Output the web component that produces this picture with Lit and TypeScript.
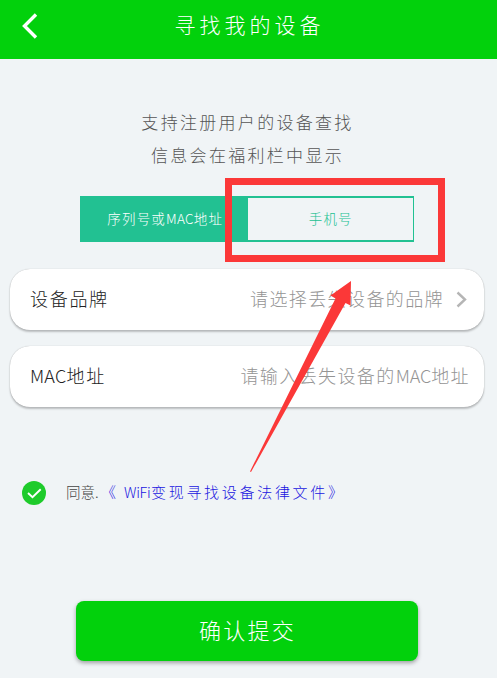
import { LitElement, html, css } from "lit";
import { customElement, property, state } from "lit/decorators.js";

@customElement("form-row")
export class FormRow extends LitElement {
  static styles = css`
    :host {
      display: block;
    }

    .row {
      display: flex;
      align-items: center;
      justify-content: space-between;
      height: 61px;
      box-sizing: border-box;
      padding: 0 14px 4px 20px;
      background: #fff;
      border-radius: 20px;
      box-shadow: 0 2px 2px rgba(0, 0, 0, 0.22), 0 0 1px rgba(0, 0, 0, 0.3);
      font-size: 18px;
      line-height: 26px;
      white-space: nowrap;
    }

    .label {
      color: #222;
      letter-spacing: 1.7px;
    }

    .value {
      display: flex;
      align-items: center;
      color: #949494;
      letter-spacing: 1.4px;
    }

    .latin {
      letter-spacing: 0.2px;
    }

    .value .latin {
      letter-spacing: -0.1px;
    }

    .chevron {
      display: block;
      margin: 4px 3px 0 12px;
    }
  `;

  @property() label = "";
  @property() placeholder = "";
  @property({ type: Boolean }) arrow = false;

  // latin runs are set tighter than the chinese text around them
  private _text(value: string) {
    return value
      .split(/([A-Za-z]+)/)
      .filter((part) => part)
      .map((part) => (/[A-Za-z]/.test(part) ? html`<span class="latin">${part}</span>` : part));
  }

  render() {
    return html`
      <div class="row">
        <span class="label">${this._text(this.label)}</span>
        <span class="value">
          <span>${this._text(this.placeholder)}</span>
          ${this.arrow
            ? html`<svg class="chevron" width="11" height="17" viewBox="0 0 11 17">
                <path d="M1.5 1.5 L9 8.5 L1.5 15.5" fill="none" stroke="#b5b5b5" stroke-width="2.4" />
              </svg>`
            : ""}
        </span>
      </div>
    `;
  }
}

@customElement("app-root")
export class AppRoot extends LitElement {
  static styles = css`
    :host {
      display: block;
      position: relative;
      height: 678px;
      overflow: hidden;
      background: #f0f4f6;
      font-family: "Noto Sans CJK SC", sans-serif;
      font-weight: 300;
    }

    .header {
      display: flex;
      align-items: center;
      height: 59px;
      box-sizing: border-box;
      padding: 0 22px 7px;
      background: #02d10c;
      color: #fff;
    }

    .back {
      display: block;
      flex: none;
    }

    .title {
      flex: 1;
      margin: 0 14px 0 0;
      padding-bottom: 5px;
      text-align: center;
      font-size: 21px;
      line-height: 30px;
      letter-spacing: 4px;
      font-weight: 300;
    }

    .intro {
      padding-top: 46px;
      text-align: center;
      color: #555;
      font-size: 17px;
      line-height: 33px;
      letter-spacing: 2.3px;
    }

    .intro p {
      margin: 0 2px 0 0;
    }

    .tabs {
      display: flex;
      width: 334px;
      height: 46px;
      box-sizing: border-box;
      margin: 25px 0 0 80px;
      border: 2px solid #22c192;
      border-right-width: 1.5px;
    }

    .tab {
      display: flex;
      flex: 1;
      align-items: center;
      justify-content: center;
      padding: 0 0 3px 1px;
      color: #22c192;
      font-size: 13.5px;
      letter-spacing: 1.2px;
      white-space: nowrap;
    }

    .tab.active {
      background: #22c192;
      color: #fff;
    }

    .latin {
      letter-spacing: 0.3px;
    }

    .rows {
      display: flex;
      flex-direction: column;
      gap: 16px;
      padding: 27px 13px 0 10px;
    }

    .agree {
      display: flex;
      align-items: center;
      margin-top: 70px;
      padding-left: 22px;
      height: 32px;
      font-size: 15px;
      line-height: 20px;
      white-space: nowrap;
    }

    .check {
      display: block;
      margin-right: 20px;
    }

    .agree-text {
      width: 35px;
      padding-bottom: 2px;
      color: #444;
      font-size: 14.5px;
    }

    .law {
      display: flex;
      padding-bottom: 2px;
      color: #2014e0;
      letter-spacing: 2.7px;
    }

    .law .open {
      width: 23px;
    }

    .law .brand {
      width: 27px;
      font-size: 14.5px;
      letter-spacing: -0.3px;
    }

    .submit {
      display: flex;
      align-items: center;
      justify-content: center;
      width: 342px;
      height: 60px;
      margin: 92px 0 0 76px;
      padding: 0 0 5px 1px;
      box-sizing: border-box;
      border: 0;
      border-radius: 8px;
      background: #02d10c;
      box-shadow: 0 2px 4px rgba(0, 0, 0, 0.35);
      color: #fff;
      font-family: inherit;
      font-weight: 300;
      font-size: 22px;
      letter-spacing: 2.2px;
    }

    .marker {
      position: absolute;
      left: 0;
      top: 0;
      pointer-events: none;
    }
  `;

  @state() private _tab = 0;
  @state() private _agreed = true;

  private _toggleAgree() {
    this._agreed = !this._agreed;
  }

  render() {
    return html`
      <div class="header">
        <svg class="back" width="16" height="26" viewBox="0 0 16 26">
          <path d="M14 1.5 L2.5 13 L14 24.5" fill="none" stroke="#fff" stroke-width="3.4" />
        </svg>
        <h1 class="title">寻找我的设备</h1>
      </div>

      <div class="intro">
        <p>支持注册用户的设备查找</p>
        <p>信息会在福利栏中显示</p>
      </div>

      <div class="tabs">
        <div class="tab ${this._tab === 0 ? "active" : ""}" @click="${() => (this._tab = 0)}">
          序列号或<span class="latin">MAC</span>地址
        </div>
        <div class="tab ${this._tab === 1 ? "active" : ""}" @click="${() => (this._tab = 1)}">
          手机号
        </div>
      </div>

      <div class="rows">
        <form-row label="设备品牌" placeholder="请选择丢失设备的品牌" arrow></form-row>
        <form-row label="MAC地址" placeholder="请输入丢失设备的MAC地址"></form-row>
      </div>

      <div class="agree">
        <svg class="check" width="24" height="24" viewBox="0 0 24 24" @click="${this._toggleAgree}">
          <circle cx="12" cy="12" r="12" fill="${this._agreed ? "#1ecb2b" : "#ccc"}" />
          <path d="M6 12 L10.5 16.2 L18.7 8.2" fill="none" stroke="#fff" stroke-width="1.9" />
        </svg>
        <span class="agree-text">同意.</span>
        <span class="law">
          <span class="open">《</span>
          <span class="brand">WiFi</span>
          <span>变现寻找设备法律文件》</span>
        </span>
      </div>

      <button class="submit">确认提交</button>

      <!-- red frame and arrow pointing at the phone number tab -->
      <svg class="marker" width="497" height="678" viewBox="0 0 497 678">
        <rect x="228.5" y="181.5" width="213" height="77" fill="none" stroke="#fb3838" stroke-width="7" />
        <polygon
          points="351,281 330.5,295.5 335.5,298.5 250,471.5 251,472 345.5,303 350.5,305.5"
          fill="#fb3838"
        />
      </svg>
    `;
  }
}
